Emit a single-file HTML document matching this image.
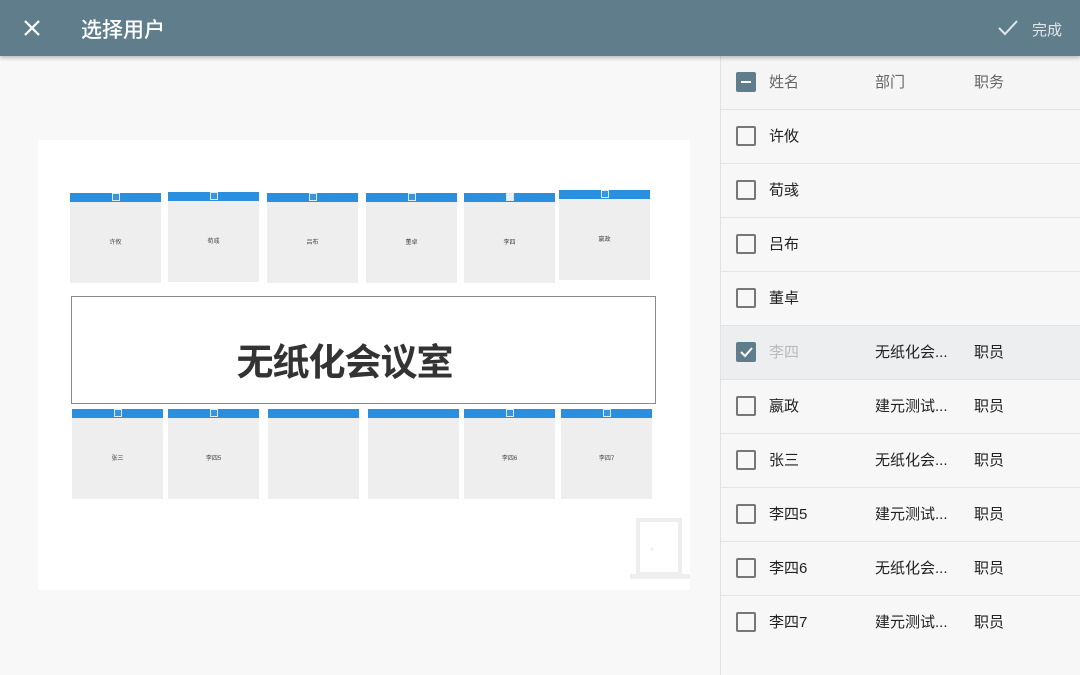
<!DOCTYPE html>
<html><head><meta charset="utf-8"><style>
*{margin:0;padding:0;box-sizing:border-box}
body{width:1080px;height:675px;overflow:hidden;background:#f7f7f7;font-family:"Liberation Sans","Noto Sans CJK SC",sans-serif;position:relative}
.top{position:absolute;left:0;top:0;width:1080px;height:56px;background:#607d8b;box-shadow:0 2px 4px rgba(0,0,0,.25);z-index:5}
.top .t{position:absolute;left:81px;top:14px;color:#fff;font-size:21px;font-weight:500}
.top .d{position:absolute;right:18px;top:19px;color:#dfe6ea;font-size:15px}
.left{position:absolute;left:0;top:56px;width:720px;height:619px;background:#f8f8f8}
.white{position:absolute;left:38px;top:84px;width:652px;height:450px;background:#fff}
.seat{position:absolute;width:91px;height:90px;background:#eeeeee}
.seat .b{height:9px;background:#2b8fe0;position:relative}
.seat .b i{position:absolute;left:42px;top:0;width:8px;height:8px;border:1px solid #dbeaf8;background:#3a95e0}
.seat span{position:absolute;width:100%;top:44px;text-align:center;font-size:6px;color:#444}
.room{position:absolute;left:71px;top:296px;width:585px;height:108px;border:1.5px solid #8a8a8a;background:#fff;font-size:37px;font-weight:bold;color:#333;text-align:center;line-height:132px;letter-spacing:-1px;padding-right:38px}
.right{position:absolute;left:720px;top:56px;width:360px;height:619px;background:#f7f7f7;border-left:1px solid #e2e2e2}
.row{position:absolute;left:0;width:360px;height:54px;border-bottom:1.5px solid #e4e4e4;font-size:15px;color:#222}
.row .cb{position:absolute;left:15px;top:16px;width:20px;height:20px;border:2px solid #777;border-radius:2px}
.row .n{position:absolute;left:48px;top:15px}
.row .dp{position:absolute;left:154px;top:15px}
.row .p{position:absolute;left:253px;top:15px}
</style></head><body>
<div class="top">
<svg style="position:absolute;left:23px;top:19px" width="18" height="18"><path d="M2 2L16 16M16 2L2 16" stroke="#fff" stroke-width="2.2"/></svg>
<div class="t">选择用户</div>
<svg style="position:absolute;left:997px;top:19px" width="22" height="18"><path d="M2 9L8 15L20 2" stroke="#dfe6ea" stroke-width="2" fill="none"/></svg>
<div class="d">完成</div>
</div>
<div class="left">
<div class="white"></div>
</div>
<div class="seat" style="left:70px;top:193px"><div class="b"><i></i></div><span>许攸</span></div>
<div class="seat" style="left:168px;top:192px"><div class="b"><i></i></div><span>荀彧</span></div>
<div class="seat" style="left:267px;top:193px"><div class="b"><i></i></div><span>吕布</span></div>
<div class="seat" style="left:366px;top:193px"><div class="b"><i></i></div><span>董卓</span></div>
<div class="seat" style="left:464px;top:193px"><div class="b"><i style="background:#e8f0f8"></i></div><span>李四</span></div>
<div class="seat" style="left:559px;top:190px"><div class="b"><i></i></div><span>嬴政</span></div>
<div class="room">无纸化会议室</div>
<div class="seat" style="left:72px;top:409px"><div class="b"><i></i></div><span>张三</span></div>
<div class="seat" style="left:168px;top:409px"><div class="b"><i></i></div><span>李四5</span></div>
<div class="seat" style="left:268px;top:409px"><div class="b"></div></div>
<div class="seat" style="left:368px;top:409px"><div class="b"></div></div>
<div class="seat" style="left:464px;top:409px"><div class="b"><i></i></div><span>李四6</span></div>
<div class="seat" style="left:561px;top:409px"><div class="b"><i></i></div><span>李四7</span></div>
<svg style="position:absolute;left:630px;top:518px" width="62" height="62"><rect x="8" y="2" width="42" height="54" fill="none" stroke="#eeeeee" stroke-width="4"/><rect x="0" y="56" width="60" height="5" fill="#eeeeee"/><circle cx="22" cy="31" r="1.5" fill="#eee"/></svg>
<div class="right">
<div class="row" style="top:0;color:#666;background:#f5f5f5"><div class="cb" style="background:#607d8b;border-color:#607d8b"><div style="position:absolute;left:3px;top:7px;width:10px;height:2px;background:#fff"></div></div><div class="n">姓名</div><div class="dp">部门</div><div class="p">职务</div></div>
<div class="row" style="top:54px"><div class="cb"></div><div class="n">许攸</div></div>
<div class="row" style="top:108px"><div class="cb"></div><div class="n">荀彧</div></div>
<div class="row" style="top:162px"><div class="cb"></div><div class="n">吕布</div></div>
<div class="row" style="top:216px"><div class="cb"></div><div class="n">董卓</div></div>
<div class="row" style="top:270px;background:#eceeef"><div class="cb" style="background:#607d8b;border-color:#607d8b"><svg style="position:absolute;left:1px;top:1px" width="14" height="14"><path d="M2 7L6 11L13 3" stroke="#fff" stroke-width="2" fill="none"/></svg></div><div class="n" style="color:#bbb">李四</div><div class="dp">无纸化会...</div><div class="p">职员</div></div>
<div class="row" style="top:324px"><div class="cb"></div><div class="n">嬴政</div><div class="dp">建元测试...</div><div class="p">职员</div></div>
<div class="row" style="top:378px"><div class="cb"></div><div class="n">张三</div><div class="dp">无纸化会...</div><div class="p">职员</div></div>
<div class="row" style="top:432px"><div class="cb"></div><div class="n">李四5</div><div class="dp">建元测试...</div><div class="p">职员</div></div>
<div class="row" style="top:486px"><div class="cb"></div><div class="n">李四6</div><div class="dp">无纸化会...</div><div class="p">职员</div></div>
<div class="row" style="top:540px;border-bottom:none"><div class="cb"></div><div class="n">李四7</div><div class="dp">建元测试...</div><div class="p">职员</div></div>
</div>
</body></html>
